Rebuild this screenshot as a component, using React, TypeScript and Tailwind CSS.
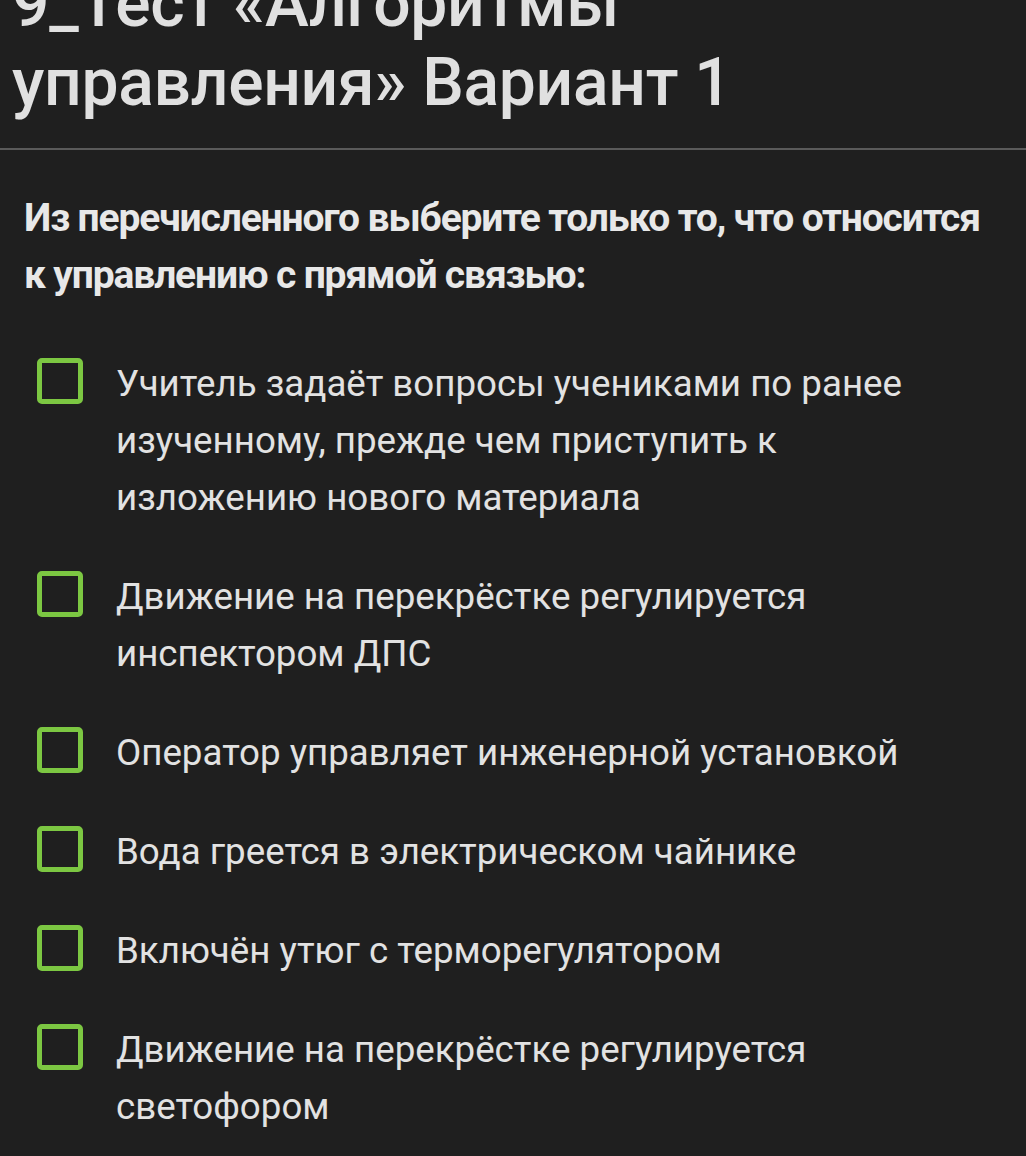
const options = [
  "Учитель задаёт вопросы учениками по ранее изученному, прежде чем приступить к изложению нового материала",
  "Движение на перекрёстке регулируется инспектором ДПС",
  "Оператор управляет инженерной установкой",
  "Вода греется в электрическом чайнике",
  "Включён утюг с терморегулятором",
  "Движение на перекрёстке регулируется светофором",
];

function Checkbox() {
  return (
    <span className="mt-[3px] block h-[46px] w-[46px] flex-none rounded-[5px] border-[5px] border-[#7cc742]" />
  );
}

export default function App() {
  return (
    <div
      className="h-[1156px] w-[1026px] overflow-hidden bg-[#1f1f1f] text-[#e2e2e2]"
      style={{ fontFamily: "Roboto, 'Noto Sans', sans-serif" }}
    >
      <header className="border-b-2 border-[#5a5a5a] px-3 pb-[26px]">
        <h1 className="-mt-[36px] text-[66px] font-medium leading-[79px] tracking-[-0.3px] text-[#e0e0e0]">
          9_Тест «Алгоритмы
          <br />
          управления» Вариант 1
        </h1>
      </header>

      <main className="px-6 pt-[40px]">
        <p className="text-[39px] font-bold leading-[57px] tracking-[-1.15px] text-[#e8e8e8]">
          Из перечисленного выберите только то, что относится
          <br />
          к управлению с прямой связью:
        </p>

        <ul className="mt-[51px] flex flex-col gap-[42px] pl-[13px]">
          {options.map((text, i) => (
            <li key={i} className="flex items-start gap-[33px]">
              <Checkbox />
              <span className="pr-[70px] text-[36.7px] leading-[57px] text-[#e2e2e2]">
                {text}
              </span>
            </li>
          ))}
        </ul>
      </main>
    </div>
  );
}
